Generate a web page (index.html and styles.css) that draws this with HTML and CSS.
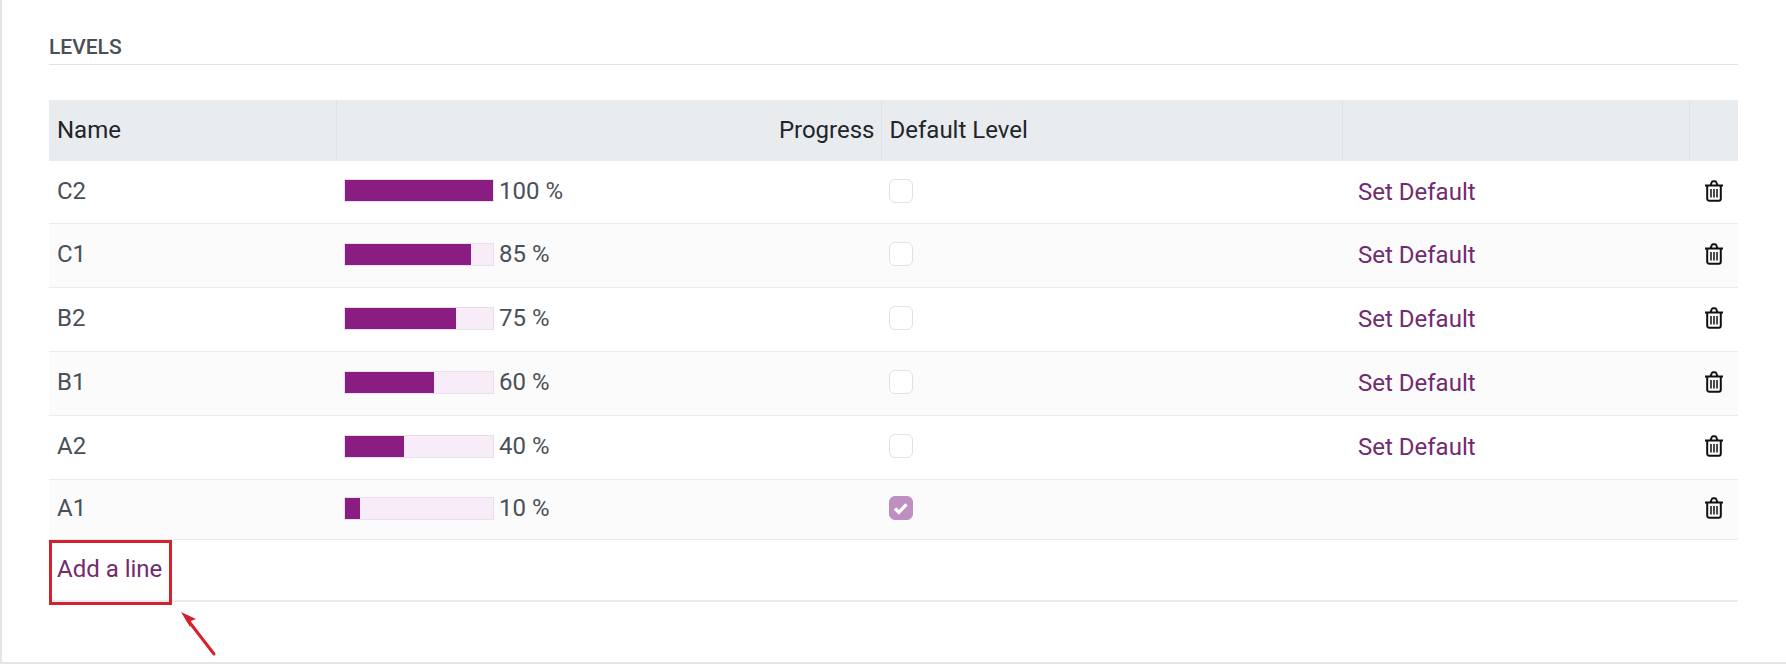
FILE: index.html
```html
<!DOCTYPE html>
<html lang="en">
<head>
  <meta charset="UTF-8">
  <title>Levels</title>
  <link rel="stylesheet" href="styles.css">
</head>
<body>
  <div class="sheet">
    <div class="section-title">LEVELS</div>

    <div class="table-wrap">
      <table class="levels">
        <colgroup>
          <col class="col-name">
          <col class="col-progress">
          <col class="col-default">
          <col class="col-action">
          <col class="col-trash">
        </colgroup>
        <thead>
          <tr>
            <th>Name</th>
            <th class="right">Progress</th>
            <th>Default Level</th>
            <th></th>
            <th></th>
          </tr>
        </thead>
        <tbody>
          <tr>
            <td>C2</td>
            <td><div class="progress"><div class="bar"><div class="fill" style="width: 100%"></div></div><span>100 %</span></div></td>
            <td><span class="check"></span></td>
            <td class="action"><a class="link" href="#">Set Default</a></td>
            <td><svg viewBox="0 0 20 22" class="trash-icon"><use href="#trash"/></svg></td>
          </tr>
          <tr>
            <td>C1</td>
            <td><div class="progress"><div class="bar"><div class="fill" style="width: 85%"></div></div><span>85 %</span></div></td>
            <td><span class="check"></span></td>
            <td class="action"><a class="link" href="#">Set Default</a></td>
            <td><svg viewBox="0 0 20 22" class="trash-icon"><use href="#trash"/></svg></td>
          </tr>
          <tr>
            <td>B2</td>
            <td><div class="progress"><div class="bar"><div class="fill" style="width: 75%"></div></div><span>75 %</span></div></td>
            <td><span class="check"></span></td>
            <td class="action"><a class="link" href="#">Set Default</a></td>
            <td><svg viewBox="0 0 20 22" class="trash-icon"><use href="#trash"/></svg></td>
          </tr>
          <tr>
            <td>B1</td>
            <td><div class="progress"><div class="bar"><div class="fill" style="width: 60%"></div></div><span>60 %</span></div></td>
            <td><span class="check"></span></td>
            <td class="action"><a class="link" href="#">Set Default</a></td>
            <td><svg viewBox="0 0 20 22" class="trash-icon"><use href="#trash"/></svg></td>
          </tr>
          <tr>
            <td>A2</td>
            <td><div class="progress"><div class="bar"><div class="fill" style="width: 40%"></div></div><span>40 %</span></div></td>
            <td><span class="check"></span></td>
            <td class="action"><a class="link" href="#">Set Default</a></td>
            <td><svg viewBox="0 0 20 22" class="trash-icon"><use href="#trash"/></svg></td>
          </tr>
          <tr class="short">
            <td>A1</td>
            <td><div class="progress"><div class="bar"><div class="fill" style="width: 10%"></div></div><span>10 %</span></div></td>
            <td><span class="check checked"><svg viewBox="0 0 24 24"><path d="M5.5 12.5l4.2 4.2 8.3-8.7"/></svg></span></td>
            <td></td>
            <td><svg viewBox="0 0 20 22" class="trash-icon"><use href="#trash"/></svg></td>
          </tr>
        </tbody>
      </table>

      <div class="add-row"><a class="link" href="#">Add a line</a></div>

      <!-- annotation over the add line button -->
      <div class="callout"></div>
      <svg class="arrow" viewBox="0 0 40 50">
        <path d="M35 43L8 8" />
        <path class="head" d="M2 1l15 7-5 2-1 6z" />
      </svg>
    </div>
  </div>

  <svg class="defs" width="0" height="0">
    <symbol id="trash" viewBox="0 0 20 22">
      <path d="M1 5.5h18M3.2 5.5v13.2a2 2 0 0 0 2 2h9.6a2 2 0 0 0 2-2V5.5M6.4 5.5l1.2-3a1.8 1.8 0 0 1 1.6-1.2h1.6a1.8 1.8 0 0 1 1.6 1.2l1.2 3" fill="none" stroke="#111" stroke-width="2"/>
      <path d="M7 9v8.5M10 9v8.5M13 9v8.5" fill="none" stroke="#111" stroke-width="1.5"/>
    </symbol>
  </svg>
</body>
</html>
```

FILE: styles.css
```css
body {
  margin: 0;
  font-family: Roboto, "Liberation Sans", sans-serif;
  background-color: #fff;
}
.sheet {
  box-sizing: border-box;
  height: 664px;
  padding: 35px 48px 0 47px;
  border-left: 2px solid #e3e7e9;
  border-bottom: 2px solid #e3e7e9;
  overflow: hidden;
}
.section-title {
  font-size: 21px;
  font-weight: 500;
  line-height: 24px;
  color: #495057;
  padding-bottom: 5px;
  border-bottom: 1px solid #dee2e6;
}
.table-wrap {
  position: relative;
  margin-top: 35px;
}
.levels {
  width: 100%;
  table-layout: fixed;
  border-collapse: collapse;
  font-size: 24px;
}
.col-name { width: 287px; }
.col-progress { width: 545px; }
.col-default { width: 461px; }
.col-action { width: 347px; }
.col-trash { width: 49px; }
.levels th {
  height: 59px;
  padding: 0 6px 2px 8px;
  text-align: left;
  font-weight: 400;
  color: #212529;
  background-color: #e9ecef;
  border-left: 1px solid #dee2e6;
}
.levels th:first-child {
  border-left: none;
}
.levels th.right {
  text-align: right;
}
.levels td {
  height: 60px;
  padding: 0 8px 3px;
  color: #495057;
  border-bottom: 1px solid #e9ecef;
}
.levels tbody tr:first-child td {
  height: 59px;
}
.levels tbody tr:nth-child(even) td {
  background-color: #fbfbfb;
}
.levels tr.short td {
  height: 56px;
}
.levels td.action {
  padding: 0 8px 1px 16px;
}
.progress {
  display: flex;
  align-items: center;
  gap: 5px;
}
.bar {
  box-sizing: border-box;
  width: 150px;
  height: 23px;
  background-color: #f8ecf9;
  border: 1px solid #e8dfea;
}
.fill {
  height: 100%;
  background-color: #8b1d82;
}
.check {
  box-sizing: border-box;
  display: block;
  width: 24px;
  height: 24px;
  background-color: #fff;
  border: 1px solid #dee2e6;
  border-radius: 6px;
}
.check.checked {
  background-color: #c08fc2;
  border-color: #c08fc2;
}
.check svg {
  display: block;
  width: 22px;
  height: 22px;
}
.check svg path {
  fill: none;
  stroke: #fff;
  stroke-width: 3.6;
}
.link {
  color: #712b6e;
  text-decoration: none;
}
.trash-icon {
  display: block;
  width: 20px;
  height: 22px;
  margin-left: 7px;
}
.add-row {
  height: 58px;
  padding: 0 8px 2px;
  display: flex;
  align-items: center;
  font-size: 24px;
  border-bottom: 2px solid #e9ecef;
}
.callout {
  position: absolute;
  left: 0;
  top: 440px;
  width: 123px;
  height: 65px;
  box-sizing: border-box;
  border: 3px solid #d3222e;
}
.arrow {
  position: absolute;
  left: 130px;
  top: 511px;
  width: 40px;
  height: 50px;
}
.arrow path {
  fill: none;
  stroke: #d3222e;
  stroke-width: 3;
  stroke-linecap: round;
}
.arrow path.head {
  fill: #d3222e;
  stroke: none;
}
.defs {
  position: absolute;
}
```
